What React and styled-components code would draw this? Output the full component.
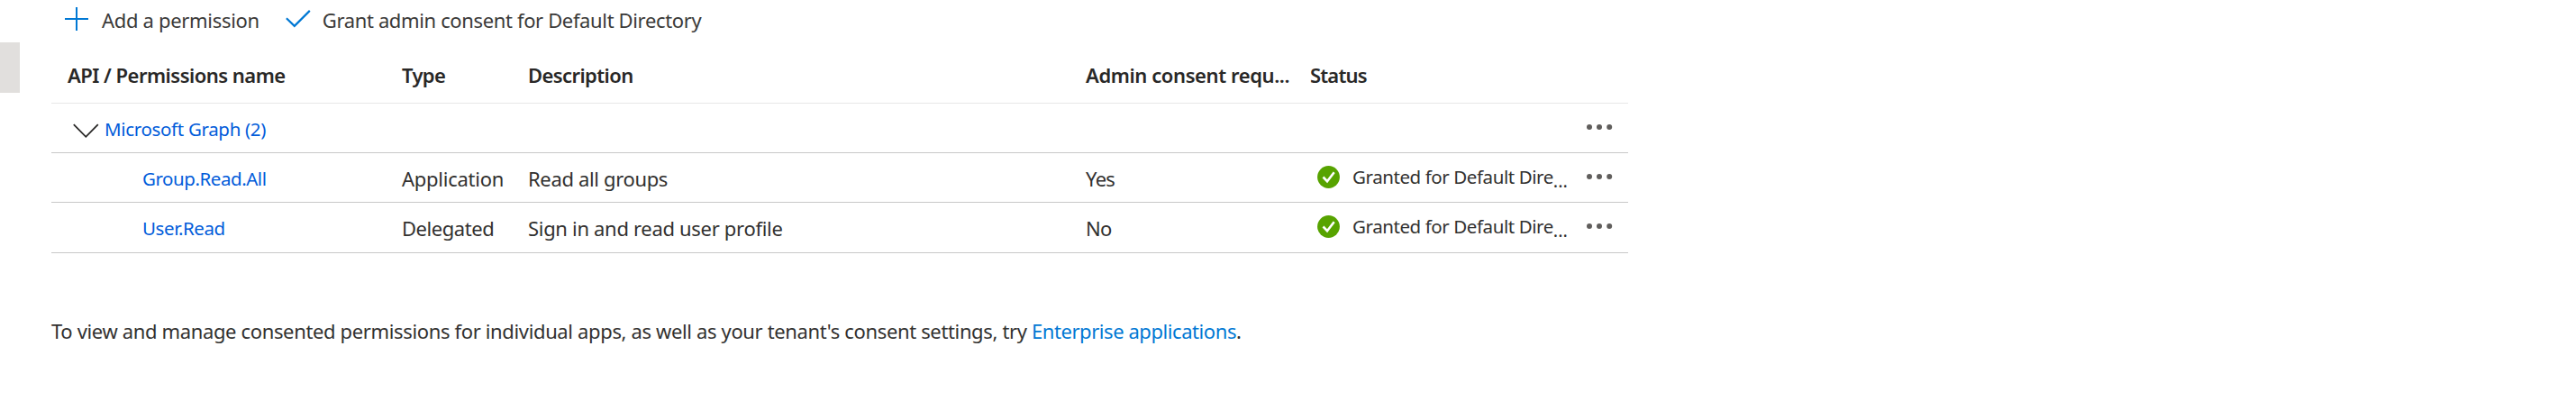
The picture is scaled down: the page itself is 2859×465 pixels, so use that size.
import React from "react";
import styled, { createGlobalStyle } from "styled-components";

const GlobalStyle = createGlobalStyle`
  * { box-sizing: border-box; }
  body { margin: 0; background: #fff; }
`;

const Page = styled.div`
  display: flex;
  align-items: flex-start;
  width: 2859px;
  height: 465px;
  overflow: hidden;
  font-family: "Noto Sans", "Open Sans", sans-serif;
  font-size: 22px;
  line-height: 30px;
  color: #323130;
  white-space: nowrap;
`;

const SideTab = styled.div`
  flex-shrink: 0;
  width: 22px;
  height: 56px;
  margin-top: 47px;
  background: #e1dfdd;
`;

const Content = styled.main`
  width: 1750px;
  margin-left: 35px;
`;

const Toolbar = styled.div`
  display: flex;
  height: 47px;
  padding: 7px 0 0 15px;
`;

const Command = styled.button`
  display: flex;
  align-items: flex-start;
  height: 30px;
  padding: 0;
  margin-right: ${(p) => p.$after || 0}px;
  border: 0;
  background: none;
  font: inherit;
  color: #3b3a39;
  svg { margin: ${(p) => p.$iconTop}px ${(p) => p.$iconGap}px 0 0; }
`;

const Label = styled.span`
  letter-spacing: ${(p) => p.$tracking || 0}px;
`;

const grid = `
  display: grid;
  grid-template-columns: 389px 140px 619px 249px 304px 49px;
`;

const HeaderRow = styled.div`
  ${grid}
  height: 68px;
  padding-top: 21px;
  border-bottom: 1px solid #e8e8e8;
  font-weight: 600;
  color: #292827;
`;

const Row = styled.div`
  ${grid}
  height: ${(p) => p.$height || 55}px;
  border-bottom: 1px solid #c8c8c8;
`;

const Cell = styled.div`
  padding-top: ${(p) => p.$top ?? 13}px;
  padding-left: ${(p) => p.$left || 0}px;
`;

const HeaderCell = styled.div`
  padding-left: ${(p) => p.$left || 0}px;
`;

const GroupCell = styled.div`
  display: flex;
  grid-column: 1 / 6;
  padding: 13px 0 0 24px;
  svg { margin: 9px 6px 0 0; }
`;

const Link = styled.a`
  font-size: ${(p) => (p.$small ? 20.5 : 22)}px;
  letter-spacing: ${(p) => p.$tracking || 0}px;
  color: ${(p) => (p.$small ? "#015cda" : "#0078d4")};
  text-decoration: none;
`;

const StatusCell = styled.div`
  display: flex;
  padding: 11px 0 0 8px;
  svg { margin: 3px 14px 0 0; }
`;

const StatusText = styled.span`
  font-size: 20.5px;
  letter-spacing: ${(p) => p.$tracking}px;
`;

const Ellipsis = styled.span`
  margin-top: 5px;
  font-size: 20px;
`;

const MenuButton = styled.button`
  display: flex;
  align-items: flex-start;
  padding: ${(p) => p.$top}px 0 0 2px;
  border: 0;
  background: none;
`;

const Footer = styled.p`
  margin: 71px 0 0;
`;

const PlusIcon = () => (
  <svg width="26" height="27" viewBox="0 0 26 27">
    <path d="M13 0v26M0 13h26" fill="none" stroke="#0078d4" strokeWidth="2" />
  </svg>
);

const CheckIcon = () => (
  <svg width="28" height="22" viewBox="0 0 28 22">
    <path d="M.9 10.3 9.8 18.9 26.8 1.9" fill="none" stroke="#0078d4" strokeWidth="2.2" />
  </svg>
);

const ChevronIcon = () => (
  <svg width="29" height="18" viewBox="0 0 29 18">
    <path d="M.8 1.2 14.3 14.8 27.8 1.2" fill="none" stroke="#292827" strokeWidth="1.8" />
  </svg>
);

const GrantedIcon = () => (
  <svg width="25" height="25" viewBox="0 0 25 25">
    <circle cx="12.5" cy="12.5" r="12.4" fill="#57a300" />
    <path d="M6.5 12.5 11 17.2 18.7 7.2" fill="none" stroke="#fff" strokeWidth="2.6" />
  </svg>
);

const DotsIcon = () => (
  <svg width="30" height="8" viewBox="0 0 30 8" fill="#605e5c">
    <circle cx="4" cy="4" r="3" />
    <circle cx="15" cy="4" r="3" />
    <circle cx="26.2" cy="4" r="3" />
  </svg>
);

const permissions = [
  {
    name: "Group.Read.All",
    nameTracking: -0.443,
    type: "Application",
    typeTracking: -0.25,
    description: "Read all groups",
    descTracking: -0.35,
    consent: "Yes",
    height: 55,
  },
  {
    name: "User.Read",
    nameTracking: -0.408,
    type: "Delegated",
    typeTracking: -0.45,
    description: "Sign in and read user profile",
    descTracking: -0.314,
    consent: "No",
    height: 56,
  },
];

export default function App() {
  return (
    <Page>
      <GlobalStyle />
      <SideTab />
      <Content>
        <Toolbar>
          <Command $iconGap={15} $iconTop={1} $after={29}>
            <PlusIcon />
            <Label $tracking={-0.316}>Add a permission</Label>
          </Command>
          <Command $iconGap={13} $iconTop={3}>
            <CheckIcon />
            <Label $tracking={-0.361}>Grant admin consent for Default Directory</Label>
          </Command>
        </Toolbar>
        <HeaderRow>
          <HeaderCell $left={18}><Label $tracking={-0.514}>API / Permissions name</Label></HeaderCell>
          <HeaderCell><Label $tracking={-0.635}>Type</Label></HeaderCell>
          <HeaderCell><Label $tracking={-0.594}>Description</Label></HeaderCell>
          <HeaderCell><Label $tracking={-0.407}>Admin consent requ...</Label></HeaderCell>
          <HeaderCell><Label $tracking={-0.834}>Status</Label></HeaderCell>
        </HeaderRow>
        <Row>
          <GroupCell>
            <ChevronIcon />
            <Link $small $tracking={-0.331}>Microsoft Graph (2)</Link>
          </GroupCell>
          <MenuButton $top={22}><DotsIcon /></MenuButton>
        </Row>
        {permissions.map((p) => (
          <Row key={p.name} $height={p.height}>
            <Cell $left={101} $top={12}><Link $small $tracking={p.nameTracking}>{p.name}</Link></Cell>
            <Cell><Label $tracking={p.typeTracking}>{p.type}</Label></Cell>
            <Cell><Label $tracking={p.descTracking}>{p.description}</Label></Cell>
            <Cell><Label $tracking={-0.7}>{p.consent}</Label></Cell>
            <StatusCell>
              <GrantedIcon />
              <StatusText $tracking={-0.421}>Granted for Default Dire</StatusText>
              <Ellipsis>...</Ellipsis>
            </StatusCell>
            <MenuButton $top={22}><DotsIcon /></MenuButton>
          </Row>
        ))}
        <Footer>
          <Label $tracking={-0.355}>To view and manage consented permissions for individual apps, as well as your tenant's consent settings, try </Label>
          <Link $tracking={-0.43}>Enterprise applications</Link>.
        </Footer>
      </Content>
    </Page>
  );
}
